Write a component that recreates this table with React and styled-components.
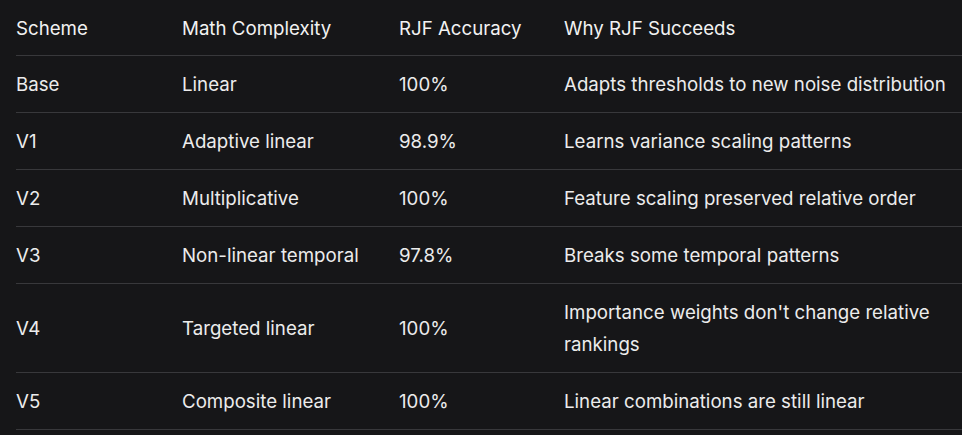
import React from "react";
import styled, { createGlobalStyle } from "styled-components";

const GlobalStyle = createGlobalStyle`
  html, body {
    margin: 0;
    padding: 0;
    background: #161618;
    overflow: hidden;
  }
`;

const Page = styled.div`
  width: 962px;
  height: 435px;
  background: #161618;
  padding-left: 16px;
  box-sizing: border-box;
  font-family: Inter, "Liberation Sans", sans-serif;
  color: #ececec;
`;

const Table = styled.table`
  border-collapse: collapse;
  table-layout: fixed;
  width: 968px;
`;

const Cell = styled.td`
  padding: 13px 16px 11px 0;
  border-bottom: 1px solid #38383b;
  font-size: 18.7px;
  line-height: 32px;
  vertical-align: middle;
  text-align: left;
`;

const HeadCell = styled(Cell).attrs({ as: "th" })`
  padding-top: 12.5px;
  padding-bottom: 10.5px;
  font-weight: 400;
  color: #f2f2f2;
`;

const columns = [166, 217, 165, 420];

const headers = ["Scheme", "Math Complexity", "RJF Accuracy", "Why RJF Succeeds"];

const rows = [
  ["Base", "Linear", "100%", "Adapts thresholds to new noise distribution"],
  ["V1", "Adaptive linear", "98.9%", "Learns variance scaling patterns"],
  ["V2", "Multiplicative", "100%", "Feature scaling preserved relative order"],
  ["V3", "Non-linear temporal", "97.8%", "Breaks some temporal patterns"],
  ["V4", "Targeted linear", "100%", "Importance weights don't change relative rankings"],
  ["V5", "Composite linear", "100%", "Linear combinations are still linear"],
];

const App = () => {
  return (
    <Page>
      <GlobalStyle />
      <Table>
        <colgroup>
          {columns.map((w, i) => (
            <col key={i} style={{ width: w }} />
          ))}
        </colgroup>
        <thead>
          <tr>
            {headers.map((h) => (
              <HeadCell key={h}>{h}</HeadCell>
            ))}
          </tr>
        </thead>
        <tbody>
          {rows.map((r) => (
            <tr key={r[0]}>
              {r.map((c, i) => (
                <Cell key={i}>{c}</Cell>
              ))}
            </tr>
          ))}
        </tbody>
      </Table>
    </Page>
  );
};

export default App;
